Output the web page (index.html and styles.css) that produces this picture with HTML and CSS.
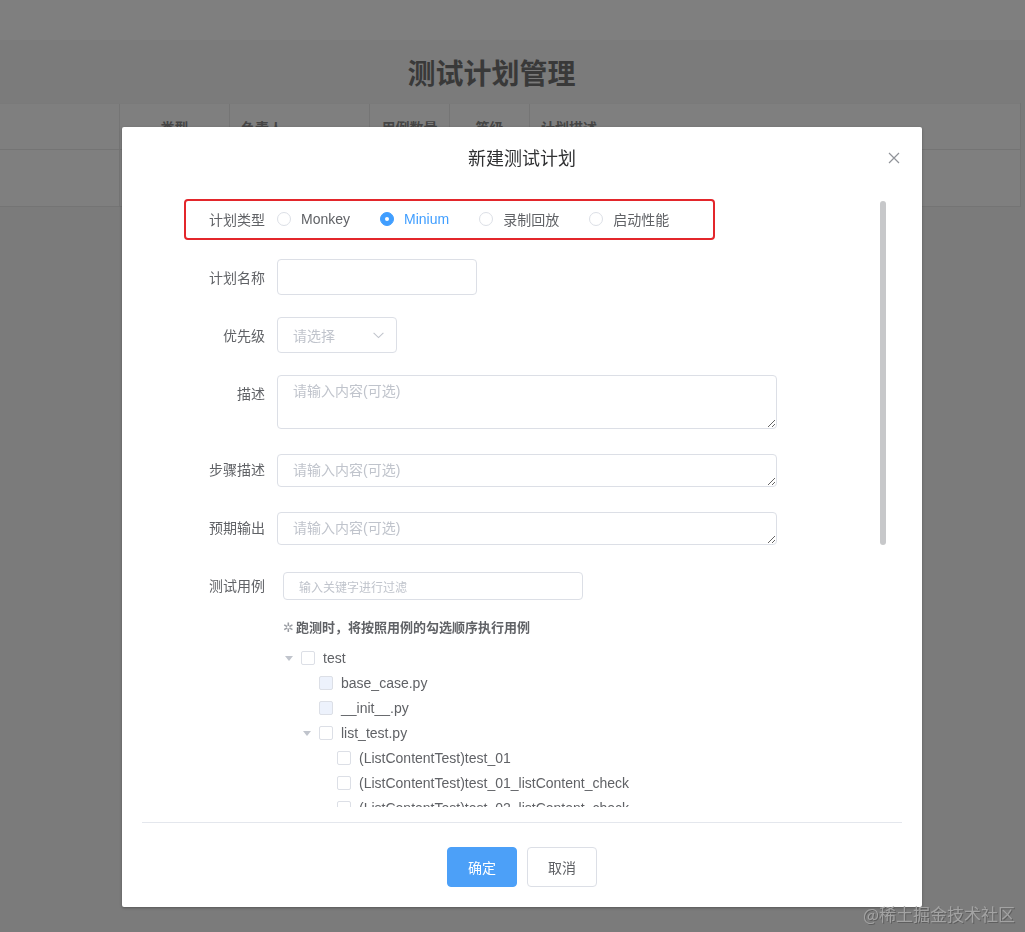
FILE: index.html
```html
<!DOCTYPE html>
<html lang="zh-CN">
<head>
<meta charset="utf-8">
<title>测试计划管理</title>
<link rel="stylesheet" href="styles.css">
</head>
<body>
<div class="page">
  <div class="topbar"></div>
  <div class="page-head"><h1 class="page-title">测试计划管理</h1></div>
  <div class="table">
    <div class="thead">
      <div class="th c0"></div>
      <div class="th c1 center">类型</div>
      <div class="th c2">负责人</div>
      <div class="th c3 center">用例数量</div>
      <div class="th c4 center">等级</div>
      <div class="th c5">计划描述</div>
    </div>
    <div class="trow">
      <div class="th c0"></div>
      <div class="th c1"></div>
      <div class="th c2"></div>
      <div class="th c3"></div>
      <div class="th c4"></div>
      <div class="th c5"></div>
    </div>
  </div>
</div>

<div class="mask">
  <div class="dialog">
    <div class="dialog-header">
      <div class="dialog-title">新建测试计划</div>
      <svg class="dialog-close" viewBox="0 0 12 12" width="12" height="12"><path d="M1 1L11 11M11 1L1 11" stroke="#909399" stroke-width="1.2" fill="none"/></svg>
    </div>
    <div class="dialog-body">
      <div class="scroll">
        <div class="scroll-content">
          <div class="form-item">
            <span class="highlight"></span>
            <label class="form-label">计划类型</label>
            <div class="form-content">
              <div class="radio-group">
                <span class="radio"><span class="radio-inner"></span><span class="radio-label">Monkey</span></span>
                <span class="radio checked"><span class="radio-inner"></span><span class="radio-label">Minium</span></span>
                <span class="radio"><span class="radio-inner"></span><span class="radio-label">录制回放</span></span>
                <span class="radio"><span class="radio-inner"></span><span class="radio-label">启动性能</span></span>
              </div>
            </div>
          </div>
          <div class="form-item">
            <label class="form-label">计划名称</label>
            <div class="form-content"><input class="input" type="text"></div>
          </div>
          <div class="form-item">
            <label class="form-label">优先级</label>
            <div class="form-content">
              <div class="select"><span>请选择</span><svg class="chev" viewBox="0 0 11 7" width="11" height="7"><path d="M0.6 0.8L5.5 5.6L10.4 0.8" stroke="#c0c4cc" stroke-width="1.1" fill="none"/></svg></div>
            </div>
          </div>
          <div class="form-item">
            <label class="form-label">描述</label>
            <div class="form-content"><textarea class="textarea two" placeholder="请输入内容(可选)"></textarea></div>
          </div>
          <div class="form-item">
            <label class="form-label">步骤描述</label>
            <div class="form-content"><textarea class="textarea one" placeholder="请输入内容(可选)"></textarea></div>
          </div>
          <div class="form-item">
            <label class="form-label">预期输出</label>
            <div class="form-content"><textarea class="textarea one" placeholder="请输入内容(可选)"></textarea></div>
          </div>
          <div class="form-item last">
            <label class="form-label">测试用例</label>
            <div class="form-content top">
              <input class="filter" type="text" placeholder="输入关键字进行过滤">
              <div class="tip"><span class="tip-icon">✲</span>跑测时，将按照用例的勾选顺序执行用例</div>
              <div class="tree">
                <div class="node l1"><span class="caret"></span><span class="cb"></span><span class="node-label">test</span></div>
                <div class="node l2"><span class="caret leaf"></span><span class="cb disabled"></span><span class="node-label">base_case.py</span></div>
                <div class="node l2"><span class="caret leaf"></span><span class="cb disabled"></span><span class="node-label">__init__.py</span></div>
                <div class="node l2"><span class="caret"></span><span class="cb"></span><span class="node-label">list_test.py</span></div>
                <div class="node l3"><span class="caret leaf"></span><span class="cb"></span><span class="node-label">(ListContentTest)test_01</span></div>
                <div class="node l3"><span class="caret leaf"></span><span class="cb"></span><span class="node-label">(ListContentTest)test_01_listContent_check</span></div>
                <div class="node l3"><span class="caret leaf"></span><span class="cb"></span><span class="node-label">(ListContentTest)test_02_listContent_check</span></div>
              </div>
            </div>
          </div>
        </div>
        <div class="scroll-thumb"></div>
      </div>
    </div>
    <div class="divider"></div>
    <div class="dialog-footer">
      <button class="btn primary" type="button">确定</button>
      <button class="btn" type="button">取消</button>
    </div>
  </div>
</div>
<div class="watermark">@稀土掘金技术社区</div>
</body>
</html>
```
FILE: styles.css
```css
* { box-sizing: border-box; }
html, body { margin: 0; height: 100%; }
body {
  background: #7b7b7b;
  font-family: "Liberation Sans", "Noto Sans CJK SC", sans-serif;
  overflow: hidden;
  position: relative;
}

/* background page */
.topbar { height: 40px; background: #7f7f7f; }
.page-head {
  height: 63px;
  background: #7b7b7b;
  display: flex;
  align-items: center;
  justify-content: center;
  padding-right: 42px;
}
.page-title {
  margin: 0;
  font-family: "Noto Sans CJK SC", sans-serif;
  font-size: 28px;
  line-height: 1;
  font-weight: 700;
  color: #393939;
}
.table { width: 1021px; background: #7f7f7f; border-right: 1px solid #747474; }
.thead, .trow { display: flex; }
.thead { height: 47px; border-bottom: 1px solid #747474; border-top: 1px solid #7a7a7a; }
.trow { height: 57px; border-bottom: 1px solid #747474; }
.th {
  border-right: 1px solid #757575;
  display: flex;
  align-items: center;
  padding: 0 11px;
  font-family: "Noto Sans CJK SC", sans-serif;
  font-size: 14px;
  font-weight: 700;
  color: #454545;
  flex: none;
}
.th.center { justify-content: center; padding: 0; }
.c0 { width: 120px; }
.c1 { width: 110px; }
.c2 { width: 140px; }
.c3 { width: 80px; }
.c4 { width: 80px; }
.c5 { flex: 1; border-right: none; }

/* dialog */
.mask { position: fixed; inset: 0; }
.dialog {
  width: 800px;
  margin: 127px 0 0 122px;
  background: #fff;
  border-radius: 2px;
  box-shadow: 0 1px 3px rgba(0,0,0,.3);
}
.dialog-header {
  position: relative;
  padding: 18px 20px 12px;
  text-align: center;
}
.dialog-title {
  font-family: "Noto Sans CJK SC", sans-serif;
  font-size: 18px;
  line-height: 24px;
  height: 24px;
  color: #303133;
}
.dialog-close { position: absolute; top: 25px; right: 22px; }
.dialog-body { padding: 14px 20px 15px; }
.scroll { height: 612px; overflow: hidden; position: relative; }
.scroll-content { padding-top: 6px; }
.scroll-thumb {
  position: absolute;
  top: 6px;
  right: 16px;
  width: 6px;
  height: 344px;
  border-radius: 3px;
  background: #c7c8ca;
}

.form-item { display: flex; margin-bottom: 22px; position: relative; }
.highlight {
  position: absolute;
  left: 42px;
  top: -2px;
  width: 531px;
  height: 41px;
  border: 2px solid #e3262b;
  border-radius: 4px;
  pointer-events: none;
}
.form-label {
  flex: none;
  width: 135px;
  padding-right: 12px;
  text-align: right;
  font-size: 14px;
  line-height: 36px;
  height: 36px;
  color: #606266;
  font-family: "Noto Sans CJK SC", sans-serif;
}
.form-content {
  flex: 1;
  min-height: 36px;
  display: flex;
  flex-direction: column;
  justify-content: flex-end;
  font-size: 14px;
}
.form-content.top { justify-content: flex-start; padding-top: 5px; }

.radio-group { display: flex; align-items: center; height: 36px; }
.radio {
  display: inline-flex;
  align-items: center;
  margin-right: 30px;
  font-size: 14px;
  color: #606266;
}
.radio-inner {
  width: 14px;
  height: 14px;
  border: 1px solid #dcdfe6;
  border-radius: 50%;
  background: #fff;
  margin-right: 10px;
  position: relative;
}
.radio.checked .radio-inner { background: #409eff; border-color: #409eff; }
.radio.checked .radio-inner::after {
  content: "";
  position: absolute;
  left: 4px;
  top: 4px;
  width: 4px;
  height: 4px;
  border-radius: 50%;
  background: #fff;
}
.radio.checked .radio-label { color: #409eff; }

.input {
  display: block;
  width: 200px;
  height: 36px;
  border: 1px solid #dcdfe6;
  border-radius: 4px;
  padding: 0 15px;
  font: inherit;
  outline: none;
}
.select {
  width: 120px;
  height: 36px;
  border: 1px solid #dcdfe6;
  border-radius: 4px;
  padding: 0 12px 0 15px;
  display: flex;
  align-items: center;
  justify-content: space-between;
  color: #c0c4cc;
  font-family: "Noto Sans CJK SC", sans-serif;
}
.textarea {
  display: block;
  width: 500px;
  height: 54px;
  padding: 5px 15px;
  border: 1px solid #dcdfe6;
  border-radius: 4px;
  font-family: "Liberation Sans", "Noto Sans CJK SC", sans-serif;
  font-size: 14px;
  line-height: 21px;
  color: #606266;
  resize: vertical;
  outline: none;
}
.textarea.one { height: 33px; }
.textarea::placeholder { color: #c0c4cc; }

.filter {
  display: block;
  margin-left: 6px;
  width: 300px;
  height: 28px;
  border: 1px solid #dcdfe6;
  border-radius: 4px;
  padding: 0 15px;
  font-family: "Noto Sans CJK SC", sans-serif;
  font-size: 12px;
  outline: none;
}
.filter::placeholder { color: #c0c4cc; }
.tip {
  margin: 17px 0 0 6px;
  line-height: 20px;
  height: 20px;
  font-family: "Noto Sans CJK SC", sans-serif;
  font-size: 13px;
  font-weight: 700;
  color: #606266;
}
.tip-icon {
  font-family: "DejaVu Sans", sans-serif;
  font-weight: 400;
  font-size: 13px;
  color: #9a9da3;
  margin-right: 2px;
}
.tree { margin-top: 8px; padding-bottom: 310px; }
.node {
  display: flex;
  align-items: center;
  height: 25px;
  font-size: 14px;
  color: #606266;
}
.node.l2 { padding-left: 18px; }
.node.l3 { padding-left: 36px; }
.caret {
  flex: none;
  width: 24px;
  height: 24px;
  position: relative;
}
.caret::after {
  content: "";
  position: absolute;
  left: 8px;
  top: 10px;
  border-left: 4px solid transparent;
  border-right: 4px solid transparent;
  border-top: 5px solid #c0c4cc;
}
.caret.leaf::after { display: none; }
.cb {
  flex: none;
  width: 14px;
  height: 14px;
  border: 1px solid #dcdfe6;
  border-radius: 2px;
  background: #fff;
  margin-right: 8px;
}
.cb.disabled { background: #edf2fc; }

.divider { height: 1px; background: #e4e7ed; margin: 0 20px; }
.dialog-footer {
  display: flex;
  justify-content: center;
  gap: 10px;
  padding: 24px 20px 20px;
}
.btn {
  width: 70px;
  height: 40px;
  border: 1px solid #dcdfe6;
  border-radius: 4px;
  background: #fff;
  color: #606266;
  font-family: "Noto Sans CJK SC", sans-serif;
  font-size: 14px;
  padding: 0;
}
.btn.primary { background: #4ca0f8; border-color: #4ca0f8; color: #fff; }

.watermark {
  position: absolute;
  right: 10px;
  bottom: 6px;
  font-family: "Noto Sans CJK SC", sans-serif;
  font-size: 17px;
  line-height: 24px;
  color: #a3a3a3;
  text-shadow: 1px 1px 0 #5e5e5e;
}
```
